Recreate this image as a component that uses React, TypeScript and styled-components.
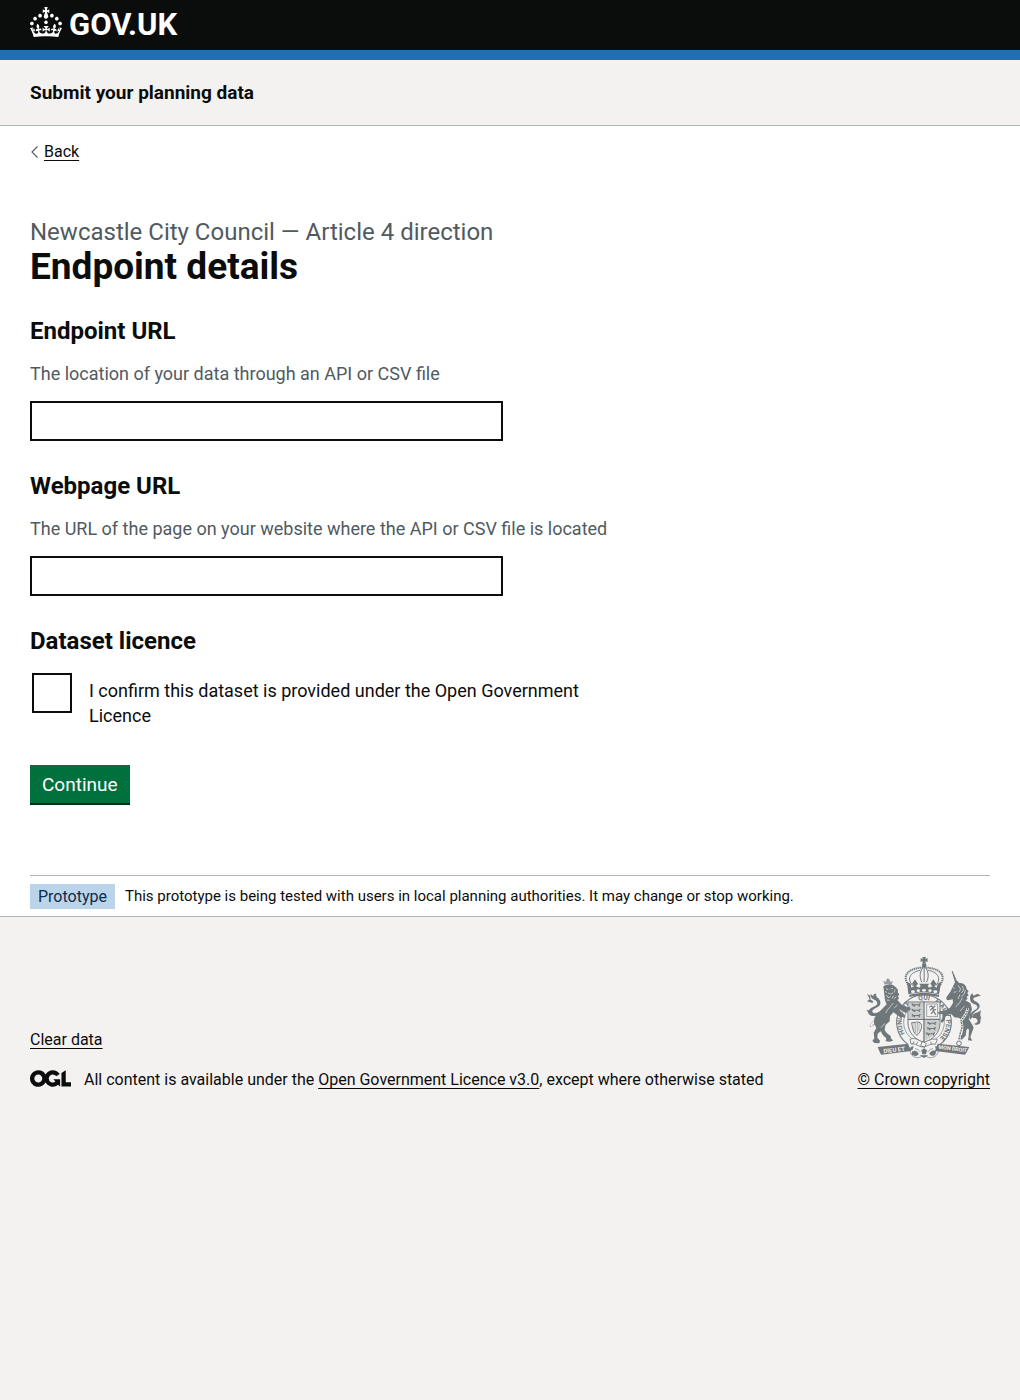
import React, { useState } from "react";
import styled, { createGlobalStyle } from "styled-components";

const colour = {
  ink: "#0b0c0c",
  secondary: "#505a5f",
  border: "#b1b4b6",
  panel: "#f3f2f1",
  brand: "#1d70b8",
  button: "#00703c",
  buttonShadow: "#002d18",
  crest: "#6f777b",
};

const GlobalStyle = createGlobalStyle`
  *, *::before, *::after { box-sizing: border-box; }
  body {
    margin: 0;
    background: ${colour.panel};
    color: ${colour.ink};
    font-family: Roboto, "Liberation Sans", sans-serif;
    font-size: 18px;
    line-height: 25px;
    -webkit-font-smoothing: antialiased;
  }
`;

const Container = styled.div`
  max-width: 1020px;
  margin: 0 auto;
  padding: 0 30px;
`;

const Header = styled.header`
  background: ${colour.ink};
  border-bottom: 10px solid ${colour.brand};
`;

const HomeLink = styled.a`
  display: inline-flex;
  align-items: center;
  gap: 7px;
  height: 50px;
  color: #fff;
  font-size: 31px;
  font-weight: 700;
  line-height: 48px;
  text-decoration: none;
  vertical-align: top;

  svg { display: block; margin-bottom: 6px; }
`;

const ServiceBar = styled.div`
  background: ${colour.panel};
  border-bottom: 1px solid ${colour.border};
`;

const ServiceName = styled.a`
  display: inline-block;
  padding: 20px 0;
  color: ${colour.ink};
  font-size: 19px;
  font-weight: 700;
  text-decoration: none;
  vertical-align: top;
`;

const Page = styled.div`
  background: #fff;
`;

const TextLink = styled.a`
  color: ${colour.ink};
  font-size: 16px;
  line-height: 20px;
  text-decoration: underline;
  text-decoration-thickness: 1px;
  text-underline-offset: 3px;
  text-decoration-skip-ink: none;

  &:hover { text-decoration-thickness: 3px; }
`;

const BackRow = styled.div`
  display: flex;
  align-items: center;
  gap: 5px;
  padding-top: 16px;
`;

const Main = styled.main`
  max-width: 630px;
  padding: 55px 0 72px;
`;

const Caption = styled.span`
  display: block;
  color: ${colour.secondary};
  font-size: 24px;
  line-height: 30px;
`;

const Title = styled.h1`
  margin: 0 0 29px;
  font-size: 37px;
  font-weight: 700;
  line-height: 40px;
`;

const Field = styled.div`
  display: flex;
  flex-direction: column;
  gap: 15px;
  margin-bottom: 30px;
`;

const FieldLabel = styled.label`
  font-size: 24px;
  font-weight: 700;
  line-height: 30px;
`;

const Hint = styled.div`
  color: ${colour.secondary};
`;

const TextInput = styled.input`
  width: 75%;
  height: 40px;
  padding: 5px;
  border: 2px solid ${colour.ink};
  border-radius: 0;
  background: #fff;
  color: ${colour.ink};
  font: inherit;

  &:focus { outline: 3px solid #fd0; box-shadow: inset 0 0 0 2px ${colour.ink}; }
`;

const Fieldset = styled.fieldset`
  min-width: 0;
  margin: 0 0 30px;
  padding: 0;
  border: 0;
`;

const Legend = styled.legend`
  margin-bottom: 15px;
  padding: 0;
  font-size: 24px;
  font-weight: 700;
  line-height: 30px;
`;

const CheckRow = styled.div`
  display: flex;
  align-items: flex-start;
  gap: 17px;
  max-width: 600px;
  padding: 2px;
`;

const Checkbox = styled.input`
  flex: none;
  appearance: none;
  width: 40px;
  height: 40px;
  margin: 0;
  border: 2px solid ${colour.ink};
  background: #fff;

  &:checked { box-shadow: inset 0 0 0 8px #fff; background: ${colour.ink}; }
`;

const CheckLabel = styled.label`
  padding: 5px 0;
`;

const Button = styled.button`
  display: block;
  padding: 8px 12px 7px;
  border: 0;
  background: ${colour.button};
  box-shadow: 0 2px 0 ${colour.buttonShadow};
  color: #fff;
  font-family: inherit;
  font-size: 19px;
  line-height: 23px;
  cursor: pointer;
`;

const PhaseBanner = styled.div`
  display: flex;
  align-items: center;
  gap: 10px;
  padding: 8px 0 7px;
  border-top: 1px solid ${colour.border};
  font-size: 15px;
`;

const Tag = styled.strong`
  padding: 0 8px;
  background: #bbd4ea;
  color: #0c2d4a;
  font-size: 16px;
  font-weight: 400;
`;

const Footer = styled.footer`
  padding: 40px 0 30px;
  border-top: 1px solid ${colour.border};
  font-size: 16px;
  line-height: 20px;
`;

const FooterColumns = styled.div`
  display: flex;
  align-items: flex-end;
  justify-content: space-between;
  gap: 30px;
`;

const FooterMeta = styled.div`
  display: flex;
  flex-direction: column;
  gap: 20px;
`;

const Licence = styled.div`
  display: flex;
  align-items: flex-start;
  gap: 13px;

  svg { flex: none; }
`;

const Copyright = styled.div`
  display: flex;
  flex: none;
  flex-direction: column;
  align-items: center;
  gap: 11px;

  svg { display: block; }
`;

function Crown() {
  return (
    <svg width="32" height="30" viewBox="0 0 32 30" fill="currentColor" aria-hidden="true">
      <path d="M22.6 10.4c-1 .4-2-.1-2.4-1-.4-.9.1-2 1-2.4.9-.4 2 .1 2.4 1s-.1 2-1 2.4m-5.9 6.7c-.9.4-2-.1-2.4-1-.4-.9.1-2 1-2.4.9-.4 2 .1 2.4 1s-.1 2-1 2.4m10.8-3.7c-1 .4-2-.1-2.4-1-.4-.9.1-2 1-2.4.9-.4 2 .1 2.4 1s0 2-1 2.4m3.3 4.8c-1 .4-2-.1-2.4-1-.4-.9.1-2 1-2.4.9-.4 2 .1 2.4 1s-.1 2-1 2.4M17 4.7l2.3 1.2V2.5l-2.3.7-.2-.2.9-3h-3.4l.9 3-.2.2c-.1.1-2.3-.7-2.3-.7v3.4L15 4.7c.1.1.1.2.2.2l-1.3 4c-.1.2-.1.4-.1.6 0 1.1.8 2 1.9 2.2h.7c1-.2 1.9-1.1 1.9-2.1 0-.2 0-.4-.1-.6l-1.3-4c-.1-.2 0-.2.1-.3m-7.6 5.7c.9.4 2-.1 2.4-1 .4-.9-.1-2-1-2.4-.9-.4-2 .1-2.4 1s0 2 1 2.4m-5 3c.9.4 2-.1 2.4-1 .4-.9-.1-2-1-2.4-.9-.4-2 .1-2.4 1s.1 2 1 2.4m-3.2 4.8c.9.4 2-.1 2.4-1 .4-.9-.1-2-1-2.4-.9-.4-2 .1-2.4 1s0 2 1 2.4m14.8 11c4.4 0 8.6.3 12.3.8 1.1-4.5 2.4-7 3.7-8.8l-2.5-.9c.2 1.3.3 1.9 0 2.7-.4-.4-.8-1.1-1.1-2.3l-1.2 4c.7-.5 1.3-.8 2-.9-1.1 2.5-2.6 3.1-3.5 3-1.1-.2-1.7-1.2-1.5-2.1.3-1.2 1.5-1.5 2.1-.1 1.1-2.3-.8-3-2-2.3 1.9-1.9 2.1-3.5.6-5.6-2.1 1.6-2.1 3.2-1.2 5.5-1.2-1.4-3.2-.6-2.5 1.6.9-1.4 2.1-.5 1.9.8-.2 1.1-1.7 2.1-3.5 1.9-2.7-.2-2.9-2.1-2.9-3.6.7-.1 1.9.5 2.9 1.9l.4-4.3c-1.1 1.1-2.1 1.4-3.2 1.4.4-1.2 2.1-3 2.1-3h-5.4s1.7 1.9 2.1 3c-1.1 0-2.1-.2-3.2-1.4l.4 4.3c1-1.4 2.2-2 2.9-1.9-.1 1.5-.2 3.4-2.9 3.6-1.9.2-3.4-.8-3.5-1.9-.2-1.3 1-2.2 1.9-.8.7-2.3-1.2-3-2.5-1.6.9-2.2.9-3.9-1.2-5.5-1.5 2-1.3 3.7.6 5.6-1.2-.7-3.1 0-2 2.3.6-1.4 1.8-1.1 2.1.1.2.9-.3 1.9-1.5 2.1-.9.2-2.4-.5-3.5-3 .6 0 1.2.3 2 .9l-1.2-4c-.3 1.1-.7 1.9-1.1 2.3-.3-.8-.2-1.4 0-2.7l-2.9.9C1.3 23 2.6 25.5 3.7 30c3.7-.5 7.9-.8 12.3-.8" />
    </svg>
  );
}

function BackChevron() {
  return (
    <svg width="9" height="12" viewBox="0 0 9 12" fill="none" stroke={colour.secondary} strokeWidth="1.1" aria-hidden="true">
      <path d="M7.5 0.5 2 6l5.5 5.5" />
    </svg>
  );
}

function OglLogo() {
  return (
    <svg width="41" height="17" viewBox="0 0 483.2 195.7" fill={colour.ink} aria-hidden="true">
      <path d="M421.5 142.8V.1l-50.7 32.3v161.1h112.4v-50.7zm-122.3-9.6A47.12 47.12 0 0 1 221 97.8c0-26 21.1-47.1 47.1-47.1 16.7 0 31.4 8.7 39.7 21.8l42.7-27.2A97.63 97.63 0 0 0 268.1 0c-36.5 0-68.3 20.1-85.1 49.7A98 98 0 0 0 97.8 0C43.9 0 0 43.9 0 97.8s43.9 97.8 97.8 97.8c36.5 0 68.3-20.1 85.1-49.7a97.76 97.76 0 0 0 149.6 25.4l19.4 22.2h3v-87.8h-80l24.3 27.5zM97.8 145c-26 0-47.1-21.1-47.1-47.1s21.1-47.1 47.1-47.1 47.1 21.1 47.1 47.1S123.8 145 97.8 145" />
    </svg>
  );
}

function PassantLion({ x, y }: { x: number; y: number }) {
  return (
    <path
      transform={`translate(${x} ${y})`}
      d="M0 3l5-2 3 3 14 0 5-3 3 2-4 3 1 5h-3l-2-4-9 0-2 4h-3l0-4-4 2-2-2 3-2z"
    />
  );
}

function RoyalArms() {
  return (
    <svg width="117" height="102" viewBox="35 36 349 306" fill={colour.crest} stroke="none" aria-hidden="true">
      {/* crown */}
      <path d="M206 36h11l-2 6 7-2v11l-7-2 2 7h-11l2-7-7 2V40l7 2z" />
      <circle cx="211.5" cy="62" r="7" />
      <g fill="none" stroke={colour.crest}>
        <path d="M167 124C138 88 172 68 208 68M256 124c29-36-5-56-41-56" strokeWidth="6" strokeDasharray="4 2" />
        <path d="M177 122C156 98 174 80 200 76M246 122c21-24 3-42-23-46" strokeWidth="3" />
        <path d="M206 70c-9 14-8 30-1 42M217 70c9 14 8 30 1 42" strokeWidth="3" />
        <path d="M211.5 70v42" strokeWidth="4" strokeDasharray="4 2" />
      </g>
      <path d="M160 110l11 6 2 12 8-4-6-8 9-13 9 13-6 8 10 4 4-6-5-6h31l-5 6 4 6 10-4-6-8 9-13 9 13-6 8 7 4 3-12 11-6-7 38c-27-7-65-7-92 0z" />
      <path d="M166 150c28-8 62-8 91 0l-2 6c-26-7-61-7-87 0z" />
      <g fill={colour.panel}>
        <ellipse cx="178" cy="140" rx="6" ry="4" />
        <ellipse cx="194" cy="137" rx="5" ry="4" />
        <ellipse cx="211" cy="136" rx="6" ry="4" />
        <ellipse cx="229" cy="137" rx="5" ry="4" />
        <ellipse cx="245" cy="140" rx="6" ry="4" />
      </g>

      {/* garter */}
      <g fill="none" stroke={colour.crest}>
        <circle cx="211" cy="232" r="82" strokeWidth="3" strokeDasharray="416 100" transform="rotate(-234 211 232)" />
        <circle cx="211" cy="232" r="61" strokeWidth="2" />
        <path id="garter-motto" d="M169 284A67 67 0 1 1 253 284" stroke="none" />
      </g>
      <g fontFamily="Roboto, sans-serif" fontSize="20" fontWeight="700" textAnchor="middle">
        <text><textPath href="#garter-motto" startOffset="22%">HONI SOIT</textPath></text>
        <text><textPath href="#garter-motto" startOffset="50%">QUI</textPath></text>
        <text><textPath href="#garter-motto" startOffset="79%">MAL Y PENSE</textPath></text>
      </g>

      {/* shield */}
      <path d="M163 171h96v62c0 32-22 50-48 60-26-10-48-28-48-60z" fill={colour.panel} stroke={colour.crest} strokeWidth="3" />
      <path d="M209 171h4v120h-4zM163 221h96v4h-96z" />
      <path d="M166 173h42v47h-42z" opacity=".3" />
      <path d="M213 225h44v12c-1 22-20 40-44 50z" opacity=".3" />
      <PassantLion x={172} y={174} />
      <PassantLion x={172} y={190} />
      <PassantLion x={172} y={206} />
      <PassantLion x={219} y={229} />
      <PassantLion x={218} y={245} />
      <PassantLion x={215} y={261} />
      <g fill="none" stroke={colour.crest}>
        <path d="M219 177h33v38h-33z" strokeWidth="2" />
        <path d="M227 186l6-3 6 5 6-6M229 196l8-7 3 8-8 10M237 197l10-4M240 200l7 10" strokeWidth="3.5" />
        <path d="M174 233c10 1 20-6 28 3 5 10-2 27-12 35-10-5-14-22-16-38z" strokeWidth="3" />
        <path d="M181 234v24M186 234v30M191 232v34M196 233v26" strokeWidth="1.5" />
      </g>

      {/* lion */}
      <path d="M93 119l-4-12 7 4 3-8 4-3 4 3 4 8 6-4-3 13c-7-3-14-3-21-1z" opacity=".7" />
      <path d="M89 124c11-7 27-8 36 1l8 9-1 8 5 6-4 6 3 7-5 4 14 15 13 7 10-1 3 6-3 5-8-1 2 6-8 1-10-9-9-1 11 11 9 8-1 6-9-2-2 6-7-8-17-12-10 12-1 15-13 12-2 15 7 9 11 8 1 8 7 5-9 4-14-1 2-9-10-9-7-12-9 7-1 12 8 9-2 8-15-1-6-7 6-7-2-17 8-14-7-14 1-16 9-13 15-15 13-13-5-12-1-10z" />
      <path d="M86 203c-16 12-35 14-41 3-5-11 8-19 21-24 9-5 5-14-4-18-8-4-13-8-11-17l8 7c-1-5 3-9 9-7-3 6 3 10 7 14 9 10 6 20-4 26-10 5-18 9-14 15 5 6 16 1 27-6z" />
      <path d="M40 146l9 6 2 12 8 5-3 5-16-5 8-6zM38 194l11 4-2 10zM80 207l-32 34 2 6 28-18zM48 240l14-16 6 7-16 14z" />
      <g fill="none" stroke={colour.panel} strokeWidth="2">
        <path d="M97 131l7 3M111 132l7-2M103 144l8 3 7-3M124 133l-3 10M98 150l5 8 8-3M120 152l-5 9M128 155l-7 6M99 165l9 1M94 139l6 4" />
        <path d="M119 174c-8 10-17 18-23 30M94 235l-12 13M132 179l-11 11" />
      </g>

      {/* unicorn */}
      <path d="M294 78l3 0 14 33-6 4z" />
      <path d="M304 112l8-4 4 6c15-2 22 8 23 19l6 5-4 6 4 7-6 4 3 7-7 4 15 9 5 17-5 14-5 16 10 16 5 10-5 14-5 14 6 11-13-1 2-12 1-20-17-19-12-16-15-2-10-11-15 4-4 16-8 8-4-6 5-8 1-13-11 1-4-6 9-3 13-3 15-8 9-14-1-11-13 3-5-2-1-7 12-17z" />
      <path d="M335 221l12 4 3 16-12 15-2 16-12 12-8-3 10-15 3-15-8-11z" />
      <path d="M349 224c-7-15 6-24 18-31 8-6 4-12-4-15-10-3-14-9-14-18 0-8 3-12 8-15 0 8 4 8 8 4 5-3 11-2 16 4-8-1-11 3-16 4-8 2-8 8 0 12 12 5 17 14 10 22-10 10-22 14-17 24z" />
      <path d="M359 207c9-4 18-6 23-11-2 11-4 15 1 23-4 2-2 9-3 14-5 7-13 8-20 4 8-2 14-7 11-12-3-6-9-7-14-5z" />
      <g fill="none" stroke={colour.panel} strokeWidth="2">
        <path d="M298 128l5 2M313 121l8 11-5 9M326 123l4 12-7 9M335 135l-4 13-8 7M319 148l-6 14M308 140l-8 2" />
        <path d="M327 158l-11 18-10 9M332 184l-13 14" />
      </g>
      <path d="M341 189c2 19-15 29-20 41 11 16-3 28-5 55" fill="none" stroke={colour.panel} strokeWidth="8" />
      <path d="M341 189c2 19-15 29-20 41 11 16-3 28-5 55" fill="none" stroke={colour.crest} strokeWidth="4" strokeDasharray="6 2" />
      <circle cx="316" cy="295" r="7" fill="none" stroke={colour.crest} strokeWidth="3" />

      {/* motto ribbon */}
      <path d="M72 306l91-10 10 22-90 11-4-6z" />
      <path d="M252 296l95 10-8 16-5 7-90-11z" />
      <g fill={colour.panel} fontFamily="Roboto, sans-serif" fontSize="18" fontWeight="700">
        <text transform="rotate(-7 90 325)" x="90" y="325">DIEU ET</text>
        <text transform="rotate(7 252 312)" x="254" y="311" fontSize="16">MON DROIT</text>
      </g>

      {/* buckle and plants */}
      <g fill="none" stroke={colour.crest} strokeWidth="2.5">
        <path d="M169 283c18-8 29 7 39 8 14 0 27-14 43-7l-6 14c-17-4-23 7-37 8-15-1-22-12-36-9z" fill={colour.panel} />
        <path d="M206 288l12 8-5 11-12-5zM181 289l-5 9M192 290l-4 9M231 290l3 9" />
        <path d="M169 316c0 12 11 23 25 22 6-1 10-5 17-5s11 4 17 5c14 1 23-7 27-21" strokeWidth="2" />
      </g>
      <path d="M176 319c8-5 17 0 19 8-4 8-15 7-22 1zM227 326c4-8 13-12 21-7l-4 12c-7 3-14 1-17-5zM203 316l8-6 9 6-3 12h-11zM198 331l26 0-13 8zM171 306l9-3-3 11-9 2zM244 303l10 4 2 10-9-3z" />
      <path d="M184 311c7 1 11 4 16 10M238 311c-7 1-11 4-16 10" fill="none" stroke={colour.crest} strokeWidth="2" />
    </svg>
  );
}

export default function App() {
  const [endpoint, setEndpoint] = useState("");
  const [webpage, setWebpage] = useState("");
  const [agreed, setAgreed] = useState(false);

  return (
    <>
      <GlobalStyle />
      <Header>
        <Container>
          <HomeLink href="#home">
            <Crown />
            <span>GOV.UK</span>
          </HomeLink>
        </Container>
      </Header>
      <ServiceBar>
        <Container>
          <ServiceName href="#service">Submit your planning data</ServiceName>
        </Container>
      </ServiceBar>
      <Page>
        <Container>
          <BackRow>
            <BackChevron />
            <TextLink href="#back">Back</TextLink>
          </BackRow>
          <Main>
            <Caption>Newcastle City Council — Article 4 direction</Caption>
            <Title>Endpoint details</Title>
            <form onSubmit={(event) => event.preventDefault()}>
              <Field>
                <FieldLabel htmlFor="endpoint-url">Endpoint URL</FieldLabel>
                <Hint id="endpoint-hint">The location of your data through an API or CSV file</Hint>
                <TextInput
                  id="endpoint-url"
                  type="url"
                  aria-describedby="endpoint-hint"
                  value={endpoint}
                  onChange={(event) => setEndpoint(event.target.value)}
                />
              </Field>
              <Field>
                <FieldLabel htmlFor="webpage-url">Webpage URL</FieldLabel>
                <Hint id="webpage-hint">
                  The URL of the page on your website where the API or CSV file is located
                </Hint>
                <TextInput
                  id="webpage-url"
                  type="url"
                  aria-describedby="webpage-hint"
                  value={webpage}
                  onChange={(event) => setWebpage(event.target.value)}
                />
              </Field>
              <Fieldset>
                <Legend>Dataset licence</Legend>
                <CheckRow>
                  <Checkbox
                    id="licence"
                    type="checkbox"
                    checked={agreed}
                    onChange={(event) => setAgreed(event.target.checked)}
                  />
                  <CheckLabel htmlFor="licence">
                    I confirm this dataset is provided under the Open Government Licence
                  </CheckLabel>
                </CheckRow>
              </Fieldset>
              <Button type="submit">Continue</Button>
            </form>
          </Main>
          <PhaseBanner>
            <Tag>Prototype</Tag>
            <span>
              This prototype is being tested with users in local planning authorities. It may change or stop working.
            </span>
          </PhaseBanner>
        </Container>
      </Page>
      <Footer>
        <Container>
          <FooterColumns>
            <FooterMeta>
              <div>
                <TextLink href="#clear">Clear data</TextLink>
              </div>
              <Licence>
                <OglLogo />
                <span>
                  All content is available under the{" "}
                  <TextLink href="#licence-text">Open Government Licence v3.0</TextLink>, except where otherwise stated
                </span>
              </Licence>
            </FooterMeta>
            <Copyright>
              <RoyalArms />
              <TextLink href="#copyright">© Crown copyright</TextLink>
            </Copyright>
          </FooterColumns>
        </Container>
      </Footer>
    </>
  );
}
